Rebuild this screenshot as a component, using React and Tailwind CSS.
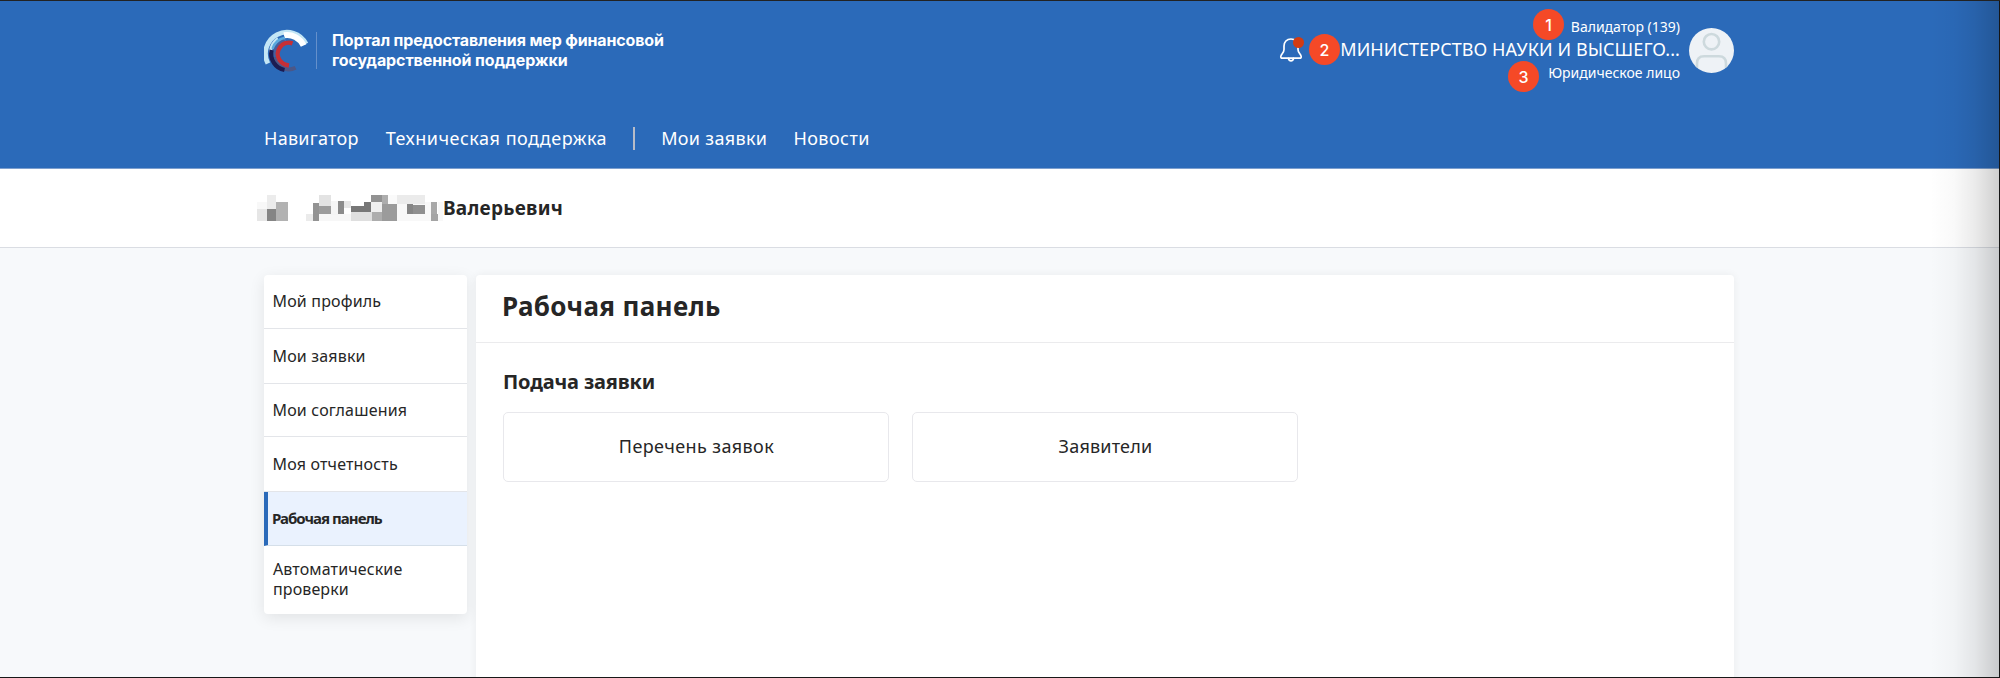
const menu = [
  { label: 'Мой профиль', row: 'h-[54px]' },
  { label: 'Мои заявки', row: 'h-[55px]' },
  { label: 'Мои соглашения', row: 'h-[53px]' },
  { label: 'Моя отчетность', row: 'h-[55px]' },
  { label: 'Рабочая панель', row: 'h-[54px]', active: true },
];

// Pixelated strip: x, y, width, height, colour
const blocks = [
  [0, 7, 10, 7, '#f8f8f8'], [10, 0, 9, 14, '#ececec'], [0, 14, 10, 12, '#e6e6e6'], [10, 14, 9, 12, '#858585'], [19, 7, 12, 19, '#b2b2b2'],
  [49, 19, 7, 7, '#ebebeb'], [56, 8, 6, 18, '#939393'], [62, 0, 12, 11, '#e3e3e3'], [62, 11, 12, 8, '#9c9c9c'], [62, 19, 32, 7, '#f7f7f7'],
  [74, 6, 7, 14, '#f5f5f5'], [81, 6, 6, 13, '#8b8b8b'], [87, 6, 7, 7, '#e6e6e6'], [94, 11, 13, 6, '#777777'], [94, 17, 21, 9, '#dfdfdf'],
  [107, 7, 7, 10, '#777777'], [114, 0, 11, 7, '#929292'], [125, 0, 6, 9, '#adadad'], [114, 7, 11, 10, '#efefef'], [115, 17, 10, 9, '#adadad'],
  [125, 9, 15, 17, '#9b9b9b'], [131, 0, 9, 9, '#fafafa'], [140, 0, 28, 9, '#ebebeb'], [140, 9, 28, 17, '#f8f8f8'],
  [150, 9, 6, 10, '#858585'], [156, 10, 12, 9, '#8f8f8f'], [168, 7, 6, 19, '#f8f8f8'], [174, 7, 6, 12, '#a8a8a8'], [174, 19, 7, 7, '#a4a4a4'], [181, 7, 5, 19, '#f8f8f8'],
];

function Logo() {
  return (
    <svg className="h-[46px] w-[46px] shrink-0" viewBox="0 0 46 46" fill="none">
      <path d="M3.9 34.5A21.400 21.400 0 0 1 42 14.800" stroke="#c3e6f5" strokeWidth="4.8" />
      <path d="M20 6.3A18 18 0 0 1 39.6 16.6" stroke="#ffffff" strokeWidth="6" />
      <path d="M6.5 24A17.5 17.5 0 0 1 14 9.500" stroke="#c3e6f5" strokeWidth="3" />
      <path d="M9.5 20A14.5 14.5 0 0 1 21 9.6" stroke="#5aa9de" strokeWidth="4.5" />
      <path d="M11 27A13 13 0 0 1 21 12" stroke="#45609f" strokeWidth="3.5" />
      <path d="M10 28A15 15 0 0 0 31.5 38.8" stroke="#4c5787" strokeWidth="4" />
      <path d="M7.6 21A16.5 16.5 0 0 0 20.5 41" stroke="#1b1b52" strokeWidth="4.2" />
      <path d="M28.5 14.3A11.2 11.2 0 0 0 15.5 31Q19 35.8 25 36.5" stroke="#c62f36" strokeWidth="4.4" />
    </svg>
  );
}

function Bell() {
  return (
    <svg className="h-[26px] w-[26px]" viewBox="0 0 26 26" fill="none" stroke="#fff" strokeWidth="1.7" strokeLinejoin="round" strokeLinecap="round">
      <path d="M12 2C7.7 2 5 5 5 9V12.5C5 16 2.2 16.5 1.8 19.5C1.7 20.7 2.3 21.2 3.3 21.2H20.7C21.7 21.2 22.3 20.7 22.2 19.5C21.8 16.5 19 16 19 12.5V9C19 5 16.3 2 12 2Z" />
      <path d="M9.5 21.4C9.7 23 10.6 23.8 12 23.8S14.3 23 14.5 21.4" />
    </svg>
  );
}

function Marker({ className, children }) {
  return (
    <span className={'absolute flex h-[31px] w-[31px] items-center justify-center rounded-full bg-[#f54927] font-[Inter] text-base font-medium text-white ' + className}>
      {children}
    </span>
  );
}

export default function App() {
  return (
    <div className="relative flex h-[678px] w-[2000px] flex-col overflow-hidden border-t border-t-[#222] bg-[#f7f9fb] font-['Noto_Sans',sans-serif] text-[#262626]">
      <header className="flex h-[168px] shrink-0 flex-col border-b border-[#7d9fce] bg-[#2b6ab9] pl-[264px] pr-[266px] text-white">
        <div className="flex h-[107px] shrink-0 items-start justify-between">
          <div className="flex items-start pt-[28px]">
            <Logo />
            <div className="ml-[6px] mt-[3px] h-[37px] w-px bg-[#6590cb]" />
            <div className="ml-[14px] mt-px whitespace-nowrap pl-px font-[Inter] text-base/[20px] font-bold">
              <div className="tracking-[-0.14px]">Портал предоставления мер финансовой</div>
              <div className="tracking-[-0.1px]">государственной поддержки</div>
            </div>
          </div>
          <div className="relative flex items-start">
            <div className="relative mr-[35px] mt-[36px]">
              <Bell />
              <span className="absolute left-[14px] top-0 h-[11px] w-[11px] rounded-full bg-[#d13b12]" />
            </div>
            <div className="mt-[15px] flex flex-col items-end whitespace-nowrap leading-[22px]">
              <div className="text-sm/[22px]">Валидатор (139)</div>
              <div className="text-lg/[22px] tracking-[0.07px]">МИНИСТЕРСТВО НАУКИ И ВЫСШЕГО...</div>
              <div className="text-sm/[25px]">Юридическое лицо</div>
            </div>
            <svg className="ml-[9px] mt-[27px] h-[45px] w-[45px] rounded-full" viewBox="0 0 45 45" fill="none">
              <rect width="45" height="45" fill="#eef2f6" />
              <circle cx="22.5" cy="13.7" r="7.7" stroke="#cdd9dd" strokeWidth="2.6" />
              <path d="M8 40V35.5C8 31 10.5 28.3 15 28.3H30C34.5 28.3 37 31 37 35.5V40" stroke="#cdd9dd" strokeWidth="2.6" />
            </svg>
            <Marker className="right-[170px] top-[8px]">1</Marker>
            <Marker className="right-[394px] top-[33px]">2</Marker>
            <Marker className="right-[195px] top-[60px]">3</Marker>
          </div>
        </div>
        <nav className="flex h-[60px] shrink-0 items-center whitespace-nowrap text-lg">
          <span className="tracking-[0.27px]">Навигатор</span>
          <span className="ml-[27px] tracking-[0.5px]">Техническая поддержка</span>
          <div className="ml-[26px] mr-[26px] h-[23px] w-[2px] bg-[#b7bcc8]" />
          <span className="tracking-[0.33px]">Мои заявки</span>
          <span className="ml-[26px] tracking-[0.45px]">Новости</span>
        </nav>
      </header>

      <section className="flex h-[79px] shrink-0 items-center border-b border-[#dadde3] bg-white pl-[257px]">
        <svg className="h-[26px] w-[186px]" viewBox="0 0 186 26" shapeRendering="crispEdges">
          {blocks.map(([x, y, w, h, c], i) => (
            <rect key={i} x={x} y={y} width={w} height={h} fill={c} />
          ))}
        </svg>
        <span className="text-[19px] font-bold tracking-[0.27px]">Валерьевич</span>
      </section>

      <div className="flex flex-1 items-start gap-[9px] pl-[264px] pt-[27px]">
        <aside className="w-[203px] rounded-[4px] bg-white shadow-[0_4px_16px_rgba(0,0,0,0.09)]">
          {menu.map((m) => (
            <div
              key={m.label}
              className={
                'flex items-center whitespace-nowrap border-b ' + m.row +
                (m.active
                  ? ' border-b-[#d5dfe9] border-l-4 border-l-[#2b6ab9] bg-[#eaf2fe] pl-[4px] text-[15px] font-bold tracking-[-0.98px]'
                  : ' border-[#e3e5e9] pb-px pl-[8.5px] text-base tracking-[0.17px]')
              }
            >
              {m.label}
            </div>
          ))}
          <div className="h-[68px] pl-[9px] pt-[13px] text-base/[20px] tracking-[0.12px]">
            Автоматические
            <br />
            проверки
          </div>
        </aside>

        <main className="h-[410px] w-[1258px] rounded-t-[4px] bg-white shadow-[0_0_8px_rgba(0,0,0,0.06)]">
          <div className="flex h-[68px] items-center border-b border-[#ebebed] pb-[4px] pl-[26px]">
            <h1 className="text-[26px] font-bold tracking-[0.35px]">Рабочая панель</h1>
          </div>
          <div className="pl-[27px] pt-[25px]">
            <h2 className="text-xl/[28px] font-bold tracking-[-0.15px]">Подача заявки</h2>
            <div className="mt-4 flex gap-[23px] text-lg">
              <div className="flex h-[70px] w-[386px] items-center justify-center rounded-[5px] border border-[#e8e8ec] pb-[3px] pl-px tracking-[0.39px]">
                Перечень заявок
              </div>
              <div className="flex h-[70px] w-[386px] items-center justify-center rounded-[5px] border border-[#e8e8ec] pb-[3px] pl-px tracking-[0.2px]">
                Заявители
              </div>
            </div>
          </div>
        </main>
      </div>

      <div className="pointer-events-none absolute inset-y-0 right-0 w-[70px] border-r border-[#151515] bg-[linear-gradient(to_right,rgba(0,0,0,0)_0%,rgba(0,0,0,0.025)_35%,rgba(0,0,0,0.08)_65%,rgba(0,0,0,0.19)_100%)]" />
      <div className="absolute inset-x-0 bottom-0 h-px bg-[#181818]" />
    </div>
  );
}
